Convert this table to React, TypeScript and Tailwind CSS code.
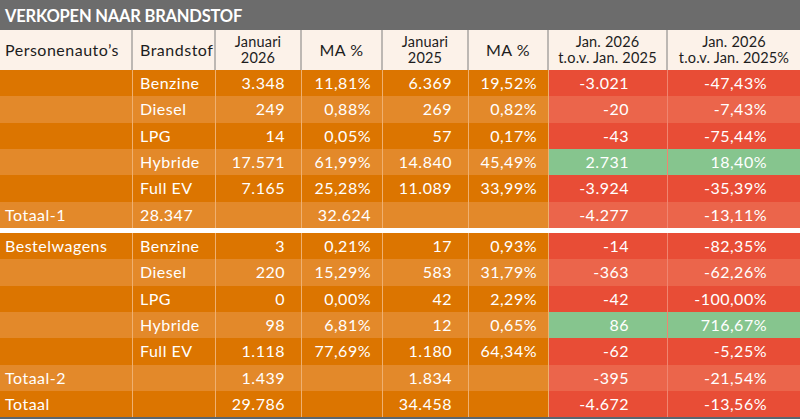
type Row = {
  cells: string[]
  tone: 'dark' | 'light'
  good?: boolean
}

const orange = { dark: 'bg-[#dc7500]', light: 'bg-[#e3892a]' }
const red = { dark: 'bg-[#e84d36]', light: 'bg-[#eb654b]' }

const cols = 'grid grid-cols-[133px_83px_86px_81px_86px_80px_119px_1fr]'

const personen: Row[] = [
  { cells: ['', 'Benzine', '3.348', '11,81%', '6.369', '19,52%', '-3.021', '-47,43%'], tone: 'dark' },
  { cells: ['', 'Diesel', '249', '0,88%', '269', '0,82%', '-20', '-7,43%'], tone: 'light' },
  { cells: ['', 'LPG', '14', '0,05%', '57', '0,17%', '-43', '-75,44%'], tone: 'dark' },
  { cells: ['', 'Hybride', '17.571', '61,99%', '14.840', '45,49%', '2.731', '18,40%'], tone: 'light', good: true },
  { cells: ['', 'Full EV', '7.165', '25,28%', '11.089', '33,99%', '-3.924', '-35,39%'], tone: 'dark' },
  { cells: ['Totaal-1', '28.347', '', '32.624', '', '', '-4.277', '-13,11%'], tone: 'light' },
]

const bestel: Row[] = [
  { cells: ['Bestelwagens', 'Benzine', '3', '0,21%', '17', '0,93%', '-14', '-82,35%'], tone: 'dark' },
  { cells: ['', 'Diesel', '220', '15,29%', '583', '31,79%', '-363', '-62,26%'], tone: 'light' },
  { cells: ['', 'LPG', '0', '0,00%', '42', '2,29%', '-42', '-100,00%'], tone: 'dark' },
  { cells: ['', 'Hybride', '98', '6,81%', '12', '0,65%', '86', '716,67%'], tone: 'light', good: true },
  { cells: ['', 'Full EV', '1.118', '77,69%', '1.180', '64,34%', '-62', '-5,25%'], tone: 'dark' },
  { cells: ['Totaal-2', '', '1.439', '', '1.834', '', '-395', '-21,54%'], tone: 'light' },
  { cells: ['Totaal', '', '29.786', '', '34.458', '', '-4.672', '-13,56%'], tone: 'dark' },
]

const pads = ['pl-[5px]', 'pl-[7px]', 'pr-[16px]', 'pr-[11px]', 'pr-[16px]', 'pr-[11px]', 'pr-[38px]', 'pr-[33px]']

function Cell({ text, i, row }: { text: string; i: number; row: Row }) {
  const isDelta = i >= 6
  const bg = isDelta ? (row.good ? 'bg-[#86c58e]' : red[row.tone]) : orange[row.tone]
  const line = isDelta ? 'border-[#f08570]' : 'border-[#efb070]'
  const justify = i < 2 ? 'justify-start' : 'justify-end'
  return (
    <div className={`flex items-center ${justify} ${pads[i]} ${bg} ${i < 7 ? `border-r ${line}` : ''}`}>
      {text}
    </div>
  )
}

function Section({ rows }: { rows: Row[] }) {
  return (
    <div>
      {rows.map((row, r) => (
        <div key={r} className={`${cols} h-[26.33px]`}>
          {row.cells.map((c, i) => (
            <Cell key={i} text={c} i={i} row={row} />
          ))}
        </div>
      ))}
    </div>
  )
}

const headers = [
  ['Personenauto’s'],
  ['Brandstof'],
  ['Januari', '2026'],
  ['MA %'],
  ['Januari', '2025'],
  ['MA %'],
  ['Jan. 2026', 't.o.v. Jan. 2025'],
  ['Jan. 2026', 't.o.v. Jan. 2025%'],
]

export default function App() {
  return (
    <div className="w-[800px] h-[419px] overflow-hidden bg-white text-[16px] tracking-[0.5px] text-white font-['Lato','Open_Sans',sans-serif]">
      <div className="h-[30px] bg-[#6c6c6c] flex items-center pl-[5px] pt-[2px]">
        <span className="font-bold text-[16.5px] tracking-[-0.2px] text-white">VERKOPEN NAAR BRANDSTOF</span>
      </div>
      <div className={`${cols} h-[40px] bg-[#fcf2e9] text-[#1d1d1d]`}>
        {headers.map((h, i) => (
          <div
            key={i}
            className={`flex flex-col justify-center ${h.length > 1 ? 'text-[14.5px] leading-[16px] tracking-[0.2px]' : 'text-[16px]'} ${i < 2 ? pads[i] + ' items-start' : 'items-center'} ${i < 7 ? 'border-r-2 border-[#bdb8b3]' : ''}`}
          >
            {h.map((line) => (
              <span key={line} className="whitespace-nowrap">
                {line}
              </span>
            ))}
          </div>
        ))}
      </div>
      <Section rows={personen} />
      <div className="h-[5px] bg-white" />
      <Section rows={bestel} />
      <div className="h-[2px] bg-[#5b6670]" />
    </div>
  )
}
